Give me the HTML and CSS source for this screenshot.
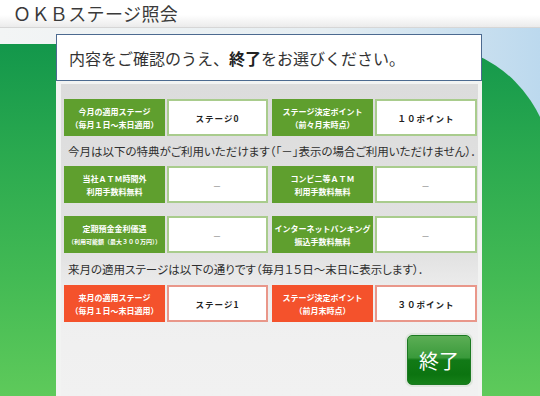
FILE: index.html
```html
<!DOCTYPE html>
<html lang="ja">
<head>
<meta charset="utf-8">
<title>ＯＫＢステージ照会</title>
<link rel="stylesheet" href="styles.css">
</head>
<body>

<div class="topbar">ＯＫＢステージ照会</div>

<div class="stage">
  <div class="panel">
    <div class="prompt">内容をご確認のうえ、<b>終了</b>をお選びください。</div>

    <div class="sheet">
      <div class="row">
        <div class="pair">
          <div class="label">今月の適用ステージ<br>（毎月１日～末日適用）</div>
          <div class="value">ステージ0</div>
        </div>
        <div class="pair">
          <div class="label">ステージ決定ポイント<br>（前々月末時点）</div>
          <div class="value">１０ポイント</div>
        </div>
      </div>

      <div class="line">今月は以下の特典がご利用いただけます（「－」表示の場合ご利用いただけません）．</div>

      <div class="row">
        <div class="pair">
          <div class="label">当社ＡＴＭ時間外<br>利用手数料無料</div>
          <div class="value dash">－</div>
        </div>
        <div class="pair">
          <div class="label">コンビニ等ＡＴＭ<br>利用手数料無料</div>
          <div class="value dash">－</div>
        </div>
      </div>

      <div class="row gap">
        <div class="pair">
          <div class="label">定期預金金利優遇<br><span class="tiny">（利用可能額（最大３００万円））</span></div>
          <div class="value dash">－</div>
        </div>
        <div class="pair">
          <div class="label">インターネットバンキング<br>振込手数料無料</div>
          <div class="value dash">－</div>
        </div>
      </div>

      <div class="line next">来月の適用ステージは以下の通りです（毎月１５日～末日に表示します）．</div>

      <div class="row red">
        <div class="pair">
          <div class="label">来月の適用ステージ<br>（毎月１日～末日適用）</div>
          <div class="value">ステージ1</div>
        </div>
        <div class="pair">
          <div class="label">ステージ決定ポイント<br>（前月末時点）</div>
          <div class="value">３０ポイント</div>
        </div>
      </div>

      <div class="actions">
        <div class="endbtn">終了</div>
      </div>
    </div>
  </div>
</div>

</body>
</html>
```

FILE: styles.css
```css
html, body
  {
    margin : 0;
    padding : 0;
  }
body
  {
    width : 540px;
    height : 396px;
    overflow : hidden;
    font-family : "Noto Sans CJK JP", "Noto Sans", sans-serif;
    color : #333;
  } /*body*/

.topbar
  {
    height : 27px;
    padding-left : 13px;
    font-size : 18px;
    line-height : 27px;
    letter-spacing : 0.4px;
    color : #3a3a3a;
    background : linear-gradient(#ffffff, #ffffff 55%, #ebebeb);
    border-bottom : 1px solid #d6d6d6;
  } /*topbar*/

.stage
  {
    position : relative;
    height : 368px;
    overflow : hidden;
    background : linear-gradient(to right, #f3f5f5, #e6eef2 60%, #bcd9ee);
  } /*stage*/
.stage:before
  {
    /* the green hill behind the panel */
    content : "";
    position : absolute;
    left : 0;
    top : 16px;
    width : 552px;
    height : 360px;
    border-top-right-radius : 127px;
    background : linear-gradient(#13974b, #2aa94f 30%, #43ba54 65%, #60cb5b);
  } /*stage:before*/

.panel
  {
    position : relative;
    margin : 6px 0 0 56px;
    width : 426px;
    height : 362px;
    background : #f2f3f2;
  } /*panel*/

.prompt
  {
    box-sizing : border-box;
    height : 47px;
    padding-left : 12px;
    display : flex;
    align-items : center;
    font-size : 16px;
    background : #ffffff;
    border : 1px solid #4c6a90;
  } /*prompt*/
.prompt b
  {
    font-weight : bold;
    color : #222;
  }

.sheet
  {
    box-sizing : border-box;
    height : 312px;
    margin : 3px 4px 0 5px;
    padding : 15px 0 0 3px;
    background : linear-gradient(#dcdcdc, #e2e2e2 55%, #efefef 68%, #f1f1f1);
  } /*sheet*/

.row
  {
    display : flex;
    gap : 4px;
    height : 37px;
  } /*row*/
.row.gap
  {
    margin-top : 13px;
  }
.pair
  {
    display : flex;
    gap : 2px;
  } /*pair*/

.label
  {
    box-sizing : border-box;
    width : 101px;
    display : flex;
    flex-direction : column;
    align-items : center;
    justify-content : center;
    text-align : center;
    font-size : 8px;
    line-height : 13px;
    font-weight : bold;
    color : #ffffff;
    white-space : nowrap;
    background : #5f9f2e;
  } /*label*/
.label .tiny
  {
    font-size : 6px;
  }

.value
  {
    box-sizing : border-box;
    width : 101px;
    display : flex;
    align-items : center;
    justify-content : center;
    font-size : 8.5px;
    font-weight : bold;
    letter-spacing : 1px;
    color : #222;
    background : #ffffff;
    border : 2px solid #a9cc8d;
  } /*value*/
.pair + .pair .value
  {
    width : 102px;
  }
.value.dash
  {
    font-weight : normal;
    color : #888;
  }

.row.red .label
  {
    background : #f4522c;
  }
.row.red .value
  {
    border-color : #e9978a;
  }

.line
  {
    height : 30px;
    padding-left : 4px;
    display : flex;
    align-items : center;
    font-size : 11.5px;
    font-feature-settings : "palt";
    color : #2e2e2e;
    white-space : nowrap;
  } /*line*/
.line.next
  {
    height : 32px;
  }

.actions
  {
    display : flex;
    justify-content : flex-end;
    margin : 13px 7px 0 0;
  } /*actions*/
.endbtn
  {
    box-sizing : border-box;
    width : 64px;
    height : 50px;
    display : flex;
    align-items : center;
    justify-content : center;
    font-size : 20px;
    color : #ffffff;
    border-radius : 5px;
    border : 1px solid #1c7a22;
    box-shadow : 0 0 0 2px #dfe6de;
    background : linear-gradient(#5cae55, #3a9a3b 45%, #127a17 50%, #0c7410 80%, #168019);
  } /*endbtn*/
```
